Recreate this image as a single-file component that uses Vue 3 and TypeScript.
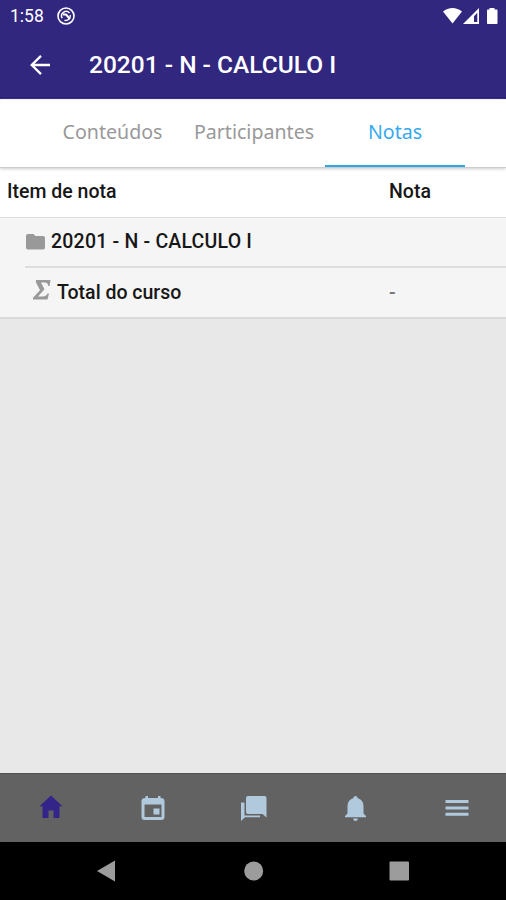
<script setup lang="ts">
interface Tab { label: string; width: number; active?: boolean }
const tabs: Tab[] = [
  { label: 'Conteúdos', width: 141 },
  { label: 'Participantes', width: 142 },
  { label: 'Notas', width: 140, active: true },
]
</script>

<template>
  <div class="screen">
    <header>
      <div class="status">
        <span class="clock">1:58</span>
        <svg class="dnd" width="18" height="18" viewBox="0 0 18 18" fill="none" stroke="#fff">
          <circle cx="9" cy="9" r="8" stroke-width="1.6" />
          <path d="M5.200 11.200A4.500 4.500 0 0 1 12.500 6M13.200 8A4.500 4.500 0 0 1 7.500 13.200" stroke-width="1.500" />
          <path d="M6 7.500h3l4 4.500" stroke-width="2" />
        </svg>
        <svg class="signals" width="56" height="18" viewBox="0 0 56 18" fill="#fff">
          <path d="M0 4.500C5.500-.3 13.500-.3 19 4.500L9.500 16.500z" />
          <path fill-rule="evenodd" d="M20 17L36 1V17zM31 9.200V15H34.300V5.700z" />
          <path d="M46.500 1h5v1.500h2c.7 0 1 .4 1 1V16c0 .7-.4 1-1 1h-8.500c-.7 0-1-.4-1-1V3.500c0-.7.4-1 1-1h1.500z" />
        </svg>
      </div>
      <div class="toolbar">
        <svg width="20" height="20" viewBox="0 0 20 20" fill="none" stroke="#fff" stroke-width="2.300">
          <path d="M20 10H2M11 .9L1.700 10l9.300 9.100" />
        </svg>
        <h1>20201 - N - CALCULO I</h1>
      </div>
    </header>
    <nav class="tabs">
      <div v-for="tab in tabs" :key="tab.label" class="tab" :class="{ active: tab.active }" :style="{ width: tab.width + 'px' }">
        <span>{{ tab.label }}</span>
      </div>
    </nav>
    <main>
      <div class="row heading"><span class="item">Item de nota</span><span>Nota</span></div>
      <div class="row course">
        <svg width="19" height="16" viewBox="0 0 19 16" fill="#999"><path d="M2 0h5.500l2 2H17q2 0 2 2v9.500q0 2-2 2H2q-2 0-2-2V2Q0 0 2 0z" /></svg>
        <span class="label">20201 - N - CALCULO I</span>
      </div>
      <div class="row total">
        <div class="item">
          <svg width="18" height="20" viewBox="0 0 18 20" fill="#999"><path d="M3 0H17.500L16.500 6H15.200C15 3.300 14 2.500 11.500 2.500H8L11.500 9.300 5 16.500H9.500C12.400 16.500 13.600 15.600 14.500 13.500H16L14.500 19.500H0V17.800L7 10.300 2.800 2z" /></svg>
          <span class="label">Total do curso</span>
        </div>
        <span class="dash">-</span>
      </div>
    </main>
    <nav class="bottom">
      <div><svg class="home" width="24" height="24" viewBox="0 0 24 24"><path d="M12 .5L.5 11.300H3.500V23H9.500V15.500H14.500V23H20.500V11.300H23.500z" /></svg></div>
      <div><svg width="24" height="24" viewBox="0 0 24 24"><path fill-rule="evenodd" d="M4.500 0H7v2h10V0h2.500v2q4 0 4 3v16q0 3-3 3h-17q-3 0-3-3V5Q.5 2 4.500 2zM3.500 8.500V21h17V8.500zM12.500 12.500h6v6h-6z" /></svg></div>
      <div><svg width="26" height="25" viewBox="0 0 26 25"><path d="M7 0h16.500Q25.500 0 25.500 2v19.500L21.500 18H7Q5 18 5 16V2Q5 0 7 0z" /><path d="M0 6.500h3.500v13h15.500v1.800H4L0 25z" /></svg></div>
      <div><svg width="21" height="25" viewBox="0 0 21 25"><path d="M10.500 0c1.200 0 2 .9 2 2 4 1.200 6 4 6 8v7.500L21 20v1.200H0V20l2.500-2.500V10c0-4 2-6.800 6-8 0-1.100.8-2 2-2zM8.200 22.500h4.600c0 1.400-.9 2.500-2.300 2.500s-2.300-1.100-2.300-2.500z" /></svg></div>
      <div><svg width="24" height="18" viewBox="0 0 24 18"><path d="M.5 1h23v3H.5zM.5 7.500h23v3H.5zM.5 13.800h23v3H.5z" /></svg></div>
    </nav>
    <footer>
      <svg width="506" height="58" viewBox="0 0 506 58" fill="#9c9c9c"><path d="M115 18.500v21L97 29z" /><circle cx="253.700" cy="29" r="9.500" /><rect x="389.500" y="19.500" width="19.500" height="19" rx="1" /></svg>
    </footer>
  </div>
</template>

<style>
body { margin: 0; }
</style>
<style scoped>
.screen { width: 506px; height: 900px; display: flex; flex-direction: column; overflow: hidden; background: #e8e8e8; font-family: Roboto, sans-serif; color: #171717; }
svg { display: block; flex: none; }
header { height: 99px; box-sizing: border-box; background: #32277f; border-bottom: 2px solid #211579; color: #fff; flex: none; }
.status { height: 32px; display: flex; align-items: center; padding: 0 7px 0 10px; box-sizing: border-box; }
.clock { font-size: 17.500px; width: 47px; }
.signals { margin-left: auto; }
.toolbar { height: 65px; display: flex; align-items: center; padding: 0 30px; }
h1 { margin: 0 0 0 39px; font-size: 24.500px; font-weight: 500; line-height: 28px; white-space: nowrap; }
.tabs { height: 69px; border-top: 1px solid #eee; border-bottom: 1px solid #ccc; box-sizing: border-box; display: flex; padding-left: 42px; background: #fff; box-shadow: 0 1px 3px #ccc; position: relative; flex: none; }
.tab { display: flex; align-items: center; justify-content: center; box-sizing: border-box; font: 19.600px "Noto Sans", sans-serif; color: #999; border-bottom: 2px solid transparent; padding-bottom: 3px; }
.tab.active { color: #38a9ef; border-color: #2da7e6; }
main { flex: 1; }
.row { display: flex; align-items: center; box-sizing: border-box; font-size: 19.500px; font-weight: 500; white-space: nowrap; }
.heading { height: 50px; padding: 0 7px 3px; background: #fff; border-bottom: 1px solid #ddd; }
.heading .item { width: 382px; }
.course { height: 48px; padding: 0 0 1px 26px; background: #f5f5f5; }
.course .label { margin-left: 6px; letter-spacing: .21px; }
.total { height: 53px; background: linear-gradient(#ddd, #ddd) 25px 0 / 481px 2px no-repeat #f5f5f5; border-bottom: 2px solid #dbdbdb; padding: 1px 0 0 33px; }
.total .item { width: 356px; display: flex; align-items: center; }
.total svg { margin-bottom: 5px; }
.total .label { margin-left: 6px; }
.dash { color: #777; }
.bottom { height: 69px; box-sizing: border-box; border-top: 1px solid #505050; background: #626262; display: grid; grid-template-columns: repeat(5, 101.400px); padding-left: .5px; flex: none; fill: #b0c9dd; }
.bottom div { display: flex; align-items: center; justify-content: center; }
.bottom .home { fill: #33248a; margin-bottom: 3px; }
footer { height: 58px; background: #000; flex: none; }
</style>
